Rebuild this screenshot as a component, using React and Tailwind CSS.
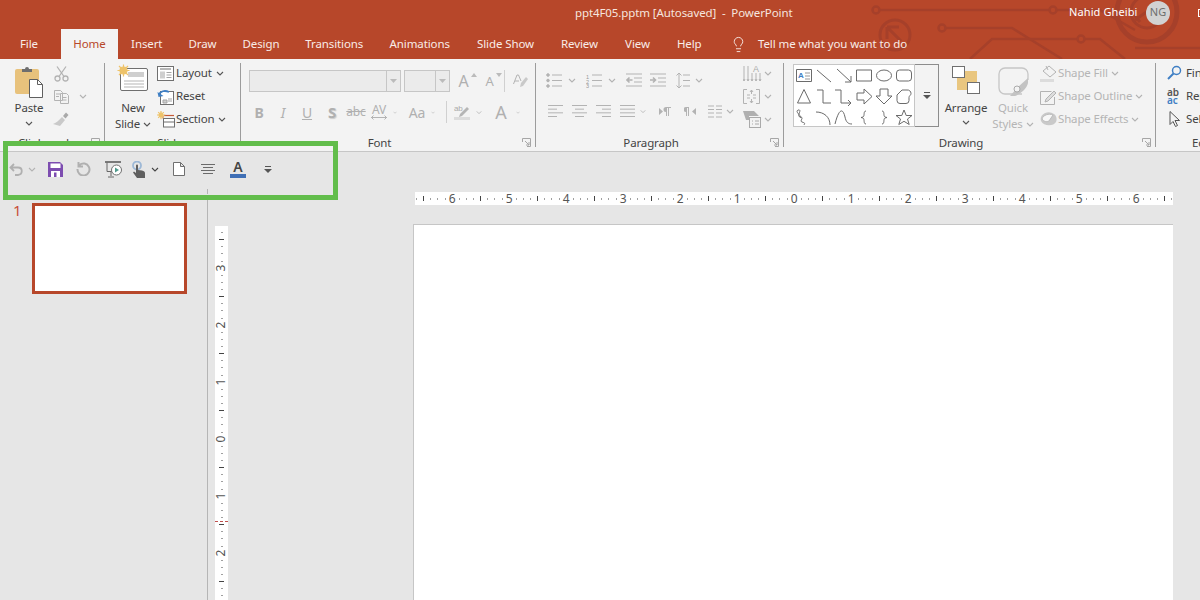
import { Lightbulb } from "lucide-react";

const G = "#b3b3b3";

function Chev({ color = "#8c8c8c" }) {
  return (
    <svg width="8" height="5" viewBox="0 0 8 5" fill="none" stroke={color} strokeWidth="1.1">
      <path d="M1 1l3 3 3-3" />
    </svg>
  );
}

function Launcher() {
  return (
    <svg width="9" height="9" viewBox="0 0 9 9" fill="none" stroke="#a6a6a6">
      <path d="M.5 4V.5h8v8H5M3 3l4 4M7 4v3H4" />
    </svg>
  );
}

function Cell({ className, children }) {
  return <div className={"flex shrink-0 items-center justify-center " + className}>{children}</div>;
}

// text-line icon used by the paragraph buttons
function Lines({ rows, w = 16 }) {
  return (
    <svg width={w} height="14" viewBox={`0 0 ${w} 14`} fill="none" stroke={G}>
      {rows.map((r, i) => (
        <path key={i} d={`M${r[0]} ${1.5 + i * (11 / (rows.length - 1))}H${r[1]}`} />
      ))}
    </svg>
  );
}

function Group({ className, label, launcher, children }) {
  return (
    <div className={"flex shrink-0 flex-col " + className}>
      <div className="h-[75px]">{children}</div>
      <div className="flex h-[17px] items-center text-[#444]">
        <div className="flex-1 text-center whitespace-nowrap">{label}</div>
        {launcher && (
          <div className="flex w-[17px] justify-center">
            <Launcher />
          </div>
        )}
      </div>
    </div>
  );
}

function Sep() {
  return <div className="mt-[4px] h-[84px] w-px shrink-0 bg-[#9c9c9c]" />;
}

function Paste() {
  return (
    <svg width="30" height="33" viewBox="0 0 30 33">
      <rect x="1" y="4" width="24" height="25" rx="2" fill="#e8c27c" />
      <path d="M8 7V4h3a2 2 0 0 1 4 0h3v3z" fill="#6e6e6e" />
      <path d="M15.5 14.500h8l5 5v13h-13z" fill="#fff" stroke="#5f5f5f" />
      <path d="M23.500 14.500v5h5" fill="none" stroke="#5f5f5f" />
    </svg>
  );
}

function Scissors() {
  return (
    <svg width="15" height="16" viewBox="0 0 15 16" fill="none" stroke={G} strokeWidth="1.3">
      <circle cx="3.500" cy="12.500" r="2.500" />
      <circle cx="11.500" cy="12.500" r="2.500" />
      <path d="M5 10.500L12 .5M10 10.500L3 .5" />
    </svg>
  );
}

function CopyIcon() {
  return (
    <svg width="15" height="14" viewBox="0 0 15 14" fill="none" stroke={G}>
      <path d="M.5.5h6l2 2v8h-8zM6.500 3.500h6l2 2v8h-8zM2 4h4M2 6.500h3M8.500 7.500h4M8.500 10h4" />
    </svg>
  );
}

function Brush() {
  return (
    <svg width="16" height="15" viewBox="0 0 16 15">
      <path d="M9 5l3 3-5 6-7-2c3-1 5-3 9-7z" fill="#c9c9c9" />
      <path d="M10 4l3-3.500 2.500 2.500-3 3.500z" fill="#a9a9a9" />
    </svg>
  );
}

function Sun({ x, y, r = 3.500 }) {
  return (
    <g stroke="#eec36a" strokeWidth="1.200">
      <path d={`M${x - r - 2.500} ${y}h${2 * r + 5}M${x} ${y - r - 2.500}v${2 * r + 5}M${x - r - 1} ${y - r - 1}l${2 * r + 2} ${2 * r + 2}M${x + r + 1} ${y - r - 1}l${-2 * r - 2} ${2 * r + 2}`} />
      <circle cx={x} cy={y} r={r} fill="#eec36a" />
    </g>
  );
}

function NewSlideIcon() {
  return (
    <svg width="32" height="28" viewBox="0 0 32 28" fill="none">
      <rect x="3.500" y="4.500" width="27" height="22" rx="1.500" fill="#fff" stroke="#6f6f6f" />
      <rect x="11" y="8" width="16" height="5" fill="#cfcfcf" />
      <path d="M7 17h20M7 20h20M7 23h20" stroke="#b5b5b5" />
      <Sun x={6.500} y={6.500} />
    </svg>
  );
}

function LayoutIcon() {
  return (
    <svg width="17" height="15" viewBox="0 0 17 15" fill="none" stroke="#6f6f6f">
      <rect x=".5" y=".5" width="16" height="14" fill="#fff" />
      <path d="M3 3h11" />
      <rect x="3" y="5.500" width="5" height="7" fill="#cfcfcf" stroke="none" />
      <path d="M9.500 6.500h5M9.500 9h5M9.500 11.500h5" stroke="#a5a5a5" />
    </svg>
  );
}

function ResetIcon() {
  return (
    <svg width="17" height="16" viewBox="0 0 17 16" fill="none">
      <rect x="3.500" y="2.500" width="13" height="13" fill="#fff" stroke="#6f6f6f" />
      <path d="M6 11h4v3H6zM11 10h4M11 12h4" fill="#cfcfcf" stroke="#a5a5a5" />
      <path d="M2 6c1-4 6-5 10-3" stroke="#3f7fc4" strokeWidth="1.800" />
      <path d="M.5 3l1 5 5-1z" fill="#3f7fc4" />
    </svg>
  );
}

function SectionIcon() {
  return (
    <svg width="18" height="17" viewBox="0 0 18 17" fill="none">
      <path d="M7 4.500h10" stroke="#c55a37" strokeWidth="1.200" />
      <path d="M6 4.500v3" stroke="#c55a37" />
      <rect x="6.500" y="7.500" width="11" height="8.500" fill="#fff" stroke="#6f6f6f" />
      <path d="M6.500 11h11" stroke="#6f6f6f" />
      <Sun x={4} y={4} r={1.800} />
    </svg>
  );
}

function Bullets({ numbered }) {
  return (
    <svg width="16" height="15" viewBox="0 0 16 15" fill="none" stroke={G}>
      <path d="M6 2h10M6 7.500h10M6 13h10" />
      {numbered ? (
        <text x="0" y="6" fontSize="5.500" fill="#999" stroke="none" fontFamily="Liberation Sans">1</text>
      ) : (
        <circle cx="2" cy="2" r="1.300" fill={G} />
      )}
      {numbered ? (
        <text x="0" y="10.500" fontSize="5.500" fill="#999" stroke="none" fontFamily="Liberation Sans">2</text>
      ) : (
        <circle cx="2" cy="7.500" r="1.300" fill={G} />
      )}
      {numbered ? (
        <text x="0" y="15" fontSize="5.500" fill="#999" stroke="none" fontFamily="Liberation Sans">3</text>
      ) : (
        <circle cx="2" cy="13" r="1.300" fill={G} />
      )}
    </svg>
  );
}

function Indent({ dir }) {
  return (
    <svg width="16" height="14" viewBox="0 0 16 14" fill="none" stroke={G}>
      <path d="M0 1h16M0 13h16M8 5h8M8 9h8" />
      <path d={dir === "out" ? "M6.500 7H1M3.500 4.500L1 7l2.500 2.500" : "M0 7h5.500M3 4.500L5.500 7 3 9.500"} strokeWidth="1.600" />
    </svg>
  );
}

function LineSpacing() {
  return (
    <svg width="14" height="17" viewBox="0 0 14 17" fill="none" stroke={G}>
      <path d="M3 1v15M.5 3.500L3 1l2.500 2.500M.5 13.500L3 16l2.500-2.500M7 3h7M7 8.500h7M7 14h7" />
    </svg>
  );
}

function Pilcrow({ flip }) {
  return (
    <svg width="12" height="9" viewBox="0 0 12 9" fill={G}>
      {flip ? <path d="M0 0h5v9H4V1H3v8H2V5a2.500 2.500 0 0 1 0-5zM12 1v7L8 4.500z" /> : <path d="M0 1v7l4-3.500zM12 0H7a2.500 2.500 0 0 0 0 5v4h1V1h1v8h1V1h2z" />}
    </svg>
  );
}

function TextDir() {
  return (
    <svg width="20" height="17" viewBox="0 0 20 17" fill="none" stroke={G}>
      <path d="M1 1v15M5 1v15M9 8v8M13 8v8M17 8v8M0 14l1 2 1-2M4 14l1 2 1-2M8 14l1 2 1-2M12 14l1 2 1-2M16 14l1 2 1-2" />
      <text x="10" y="7" fontSize="9" fill="#aaa" stroke="none" fontFamily="Liberation Sans">A</text>
    </svg>
  );
}

function AlignText() {
  return (
    <svg width="17" height="15" viewBox="0 0 17 15" fill="none" stroke={G}>
      <path d="M4 .5H.5v14H4M13 .5h3.500v14H13M4 6h3M10 6h3M4 9h3M10 9h3M8.500 1v4M7 3l1.500-2L10 3M8.500 10v4M7 12l1.500 2 1.500-2" />
    </svg>
  );
}

function SmartArt() {
  return (
    <svg width="18" height="17" viewBox="0 0 18 17" fill="none">
      <path d="M0 0h11l5 5H6v4H3z" fill="#b0b0b0" />
      <rect x="6.500" y="6.500" width="11" height="10" fill="#f3f3f3" stroke="#aaa" />
      <path d="M9 10h1M12 10h4M9 13h1M12 13h4" stroke="#aaa" />
    </svg>
  );
}

const shapes = [
  "M3 5L17 17",
  "M3 4L17 17M17 11V17H11",
  "M2.500 5h15v11h-15z",
  "M17.500 10.500a7.500 5.500 0 1 1-15 0a7.500 5.500 0 1 1 15 0z",
  "M5.500 5h9a3 3 0 0 1 3 3v5a3 3 0 0 1-3 3h-9a3 3 0 0 1-3-3V8a3 3 0 0 1 3-3z",
  "M10 3.500L16.500 17h-13z",
  "M3 4H9V17H17",
  "M1 4H7V17H17M14 14l3 3-3 3",
  "M3 7H10V3L18 10.500L10 18V14H3z",
  "M6 3H14V10H18L10 18L2 10H6z",
  "M8 4h5a3.500 3.500 0 0 1 4 3.500c0 2-2 2-2 4v3a3 3 0 0 1-3 3H6a3 3 0 0 1-3-3V9z",
  "M4 3c5-1-2 6 2 7 5 0-1 4 2 5s3 1 2 3M4 3c-3 2 2 4 3 8",
  "M2 5C10 5 16 10 16 18",
  "M1 17C5 1 9 1 11 10 12 15 14 17 18 17",
  "M12 4C9 4 11 9 9 10L7 10.500 9 11C11 12 9 17 12 17",
  "M8 4C11 4 9 9 11 10L13 10.500 11 11C9 12 11 17 8 17",
  "M10 3l2.200 5.500H18L13.500 12l1.700 5.500L10 14.300 4.800 17.500 6.500 12 2 8.500h5.800z",
];

function ShapesGallery() {
  return (
    <div className="grid h-[63px] w-[122px] shrink-0 grid-cols-[repeat(6,20px)] grid-rows-[repeat(3,21px)] border border-[#c6c6c6] bg-white">
      <svg width="20" height="21" viewBox="0 0 20 21" fill="none" stroke="#6b6b6b">
        <path d="M2.500 4.500h15v12h-15z" />
        <text x="4" y="13" fontSize="8" fontWeight="700" fill="#3f7fc4" stroke="none" fontFamily="Liberation Sans">A</text>
        <path d="M11 8h5M11 11h5M11 14h5" stroke="#999" />
      </svg>
      {shapes.map((d, i) => (
        <svg key={i} width="20" height="21" viewBox="0 0 20 21" fill="none" stroke="#6b6b6b">
          <path d={d} />
        </svg>
      ))}
    </div>
  );
}

function Arrange() {
  return (
    <svg width="28" height="28" viewBox="0 0 28 28">
      <rect x="5" y="5" width="20" height="19" fill="#e9c67f" />
      <rect x=".5" y=".5" width="12" height="11" fill="#fff" stroke="#6f6f6f" />
      <rect x="15.500" y="16.500" width="12" height="11" fill="#fff" stroke="#6f6f6f" />
    </svg>
  );
}

function QuickStyles() {
  return (
    <svg width="31" height="30" viewBox="0 0 31 30" fill="none">
      <path d="M24 27H7a6 6 0 0 1-6-6V7a6 6 0 0 1 6-6h17a6 6 0 0 1 6 6v6" stroke="#c6c6c6" strokeWidth="1.300" />
      <path d="M30 11L20 20l-8 9h5c6-2 12-8 13-13z" fill="#c3c3c3" />
      <circle cx="19" cy="22" r="3" fill="#f3f3f3" stroke="#aaa" />
    </svg>
  );
}

function ShapeFillIcon() {
  return (
    <svg width="18" height="17" viewBox="0 0 18 17" fill="none" stroke={G}>
      <path d="M3 6l6-5 7 6-6 5z" />
      <path d="M6 1l2 4" />
      <rect x="0" y="14" width="14" height="3" fill="#dcdcdc" stroke="none" />
    </svg>
  );
}

function ShapeOutlineIcon() {
  return (
    <svg width="18" height="16" viewBox="0 0 18 16" fill="none" stroke={G}>
      <path d="M.5 2.500h11M.5 2.500v13h14V8" />
      <path d="M6 10l8-8 2 2-8 8-3 1z" fill="#dcdcdc" />
    </svg>
  );
}

function ShapeEffectsIcon() {
  return (
    <svg width="18" height="15" viewBox="0 0 18 15">
      <path d="M1 9a8 7 0 0 1 13-7c3 2 3 6 2 8-2 4-12 5-15-1z" fill="#c9c9c9" />
      <path d="M2 7c1-4 7-6 11-4l-4 6c-2 1-5 1-7-2z" fill="#f7f7f7" stroke="#bbb" />
    </svg>
  );
}

function FindIcon() {
  return (
    <svg className="shrink-0" width="15" height="15" viewBox="0 0 15 15" fill="none">
      <circle cx="9.500" cy="5.500" r="4" stroke="#3f7fc4" strokeWidth="1.500" />
      <path d="M6.500 8.500L1 14" stroke="#3f7fc4" strokeWidth="2" />
    </svg>
  );
}

function SelectIcon() {
  return (
    <svg className="shrink-0" width="11" height="16" viewBox="0 0 11 16" fill="#f3f3f3" stroke="#555">
      <path d="M1 .5v13l3-3 2.500 5 2-1-2.500-5h4.500z" />
    </svg>
  );
}

function Undo() {
  return (
    <svg width="15" height="13" viewBox="0 0 15 13" fill="none" stroke="#b0b0b0" strokeWidth="1.800">
      <path d="M5 1L1.500 4.500 5 8M2 4.500h7c5 0 5 7 0 7.500H6" />
    </svg>
  );
}

function Save() {
  return (
    <svg width="15" height="15" viewBox="0 0 15 15">
      <path d="M0 0h12l3 3v12H0z" fill="#7d4db0" />
      <rect x="2.500" y="1.500" width="10" height="4.500" fill="#fff" />
      <rect x="3" y="9" width="9" height="6" fill="#fff" />
      <rect x="6" y="10.500" width="2.500" height="4.500" fill="#7d4db0" />
    </svg>
  );
}

function Redo() {
  return (
    <svg width="15" height="14" viewBox="0 0 15 14" fill="none" stroke="#b0b0b0" strokeWidth="2">
      <path d="M3.500 3A6 6 0 1 1 1.500 7M2.500 0v4.500H7" />
    </svg>
  );
}

function Present() {
  return (
    <svg width="17" height="17" viewBox="0 0 17 17" fill="none">
      <path d="M0 1h16" stroke="#555" strokeWidth="1.500" />
      <path d="M2 1.500v9h5M6 11v4M3 16h6" stroke="#666" />
      <circle cx="11.500" cy="9" r="5" fill="#fff" stroke="#6f6f6f" />
      <path d="M10 6.500v5l4-2.500z" fill="#4f9a8c" />
    </svg>
  );
}

function Touch() {
  return (
    <svg width="13" height="17" viewBox="0 0 13 17">
      <circle cx="5" cy="4.500" r="4" fill="none" stroke="#9db8d6" strokeWidth="1.800" />
      <path d="M4 4.500a1 1 0 0 1 2 0V9l4 .5c2 .5 3 1 3 3V17H5L1 11.500l1-1 2 1.500z" fill="#5f5f5f" />
    </svg>
  );
}

function Doc() {
  return (
    <svg width="12" height="14" viewBox="0 0 12 14" fill="#fff" stroke="#6f6f6f">
      <path d="M.5.500h7l4 4v9H.5zM7.500.500v4h4" />
    </svg>
  );
}

function AlignCenter() {
  return (
    <svg width="14" height="11" viewBox="0 0 14 11" fill="none" stroke="#6b6b6b">
      <path d="M0 .5h14M2 3.500h10M0 6.500h14M2 9.500h10" />
    </svg>
  );
}

function MoreBtn() {
  return (
    <svg width="8" height="7" viewBox="0 0 8 7" fill="#555">
      <path d="M1 0h6v1H1zM0 3h8L4 7z" />
    </svg>
  );
}

function TitleArt() {
  return (
    <svg className="absolute top-0 left-0" width="1200" height="59" viewBox="0 0 1200 59" fill="none" stroke="#a6402a" strokeWidth="2.500">
      <path d="M879 10H1049M1057 10H1100L1135 30" />
      <circle cx="876" cy="10" r="3.500" />
      <circle cx="1053" cy="10" r="3.500" />
      <path d="M946 28H1012L1062 59" />
      <circle cx="942" cy="28" r="3.500" />
      <path d="M970 59L992 39H1077M1085 39H1100L1125 59" />
      <circle cx="1081" cy="39" r="3.500" />
      <circle cx="895" cy="35" r="15" strokeWidth="3" />
      <path d="M887 27h12M887 27v12M887 27l14 14" strokeWidth="3" />
      <circle cx="1147" cy="12" r="30" strokeWidth="5" />
      <circle cx="1147" cy="12" r="16" strokeWidth="3" />
      <path d="M1135 48H1200" />
      <path d="M1135 20l20-14M1140 22l-8-10" strokeWidth="3" />
    </svg>
  );
}

const tabs = [
  ["Insert", "w-[57.500px]"],
  ["Draw", "w-[54px]"],
  ["Design", "w-[63px]"],
  ["Transitions", "w-[83.500px]"],
  ["Animations", "w-[87.500px]"],
  ["Slide Show", "w-[84px]"],
  ["Review", "w-[64px]"],
  ["View", "w-[52px]"],
  ["Help", "w-[51.500px]"],
];

function HRuler() {
  const slots = [];
  for (let k = -53; k <= 53; k++) slots.push(k);
  return (
    <div className="flex h-[13px] w-[758px] items-center overflow-hidden bg-white">
      <div className="-ml-[2px] flex items-center">
        {slots.map((k) => (
          <div key={k} className="flex h-[13px] w-[7.125px] shrink-0 items-center justify-center">
            {k % 8 === 0 ? (
              <span className="text-[12px] leading-none text-[#555]">{Math.abs(k / 8)}</span>
            ) : Math.abs(k % 8) === 4 ? (
              <div className="h-[5px] w-px bg-[#444]" />
            ) : (
              <div className="h-[2px] w-px bg-[#a0a0a0]" />
            )}
          </div>
        ))}
      </div>
    </div>
  );
}

function VRuler() {
  const slots = [];
  for (let k = -29; k <= 23; k++) slots.push(k);
  return (
    <div className="relative mt-[74px] ml-[7px] flex h-[374px] w-[13px] shrink-0 flex-col overflow-hidden bg-white pt-[3px]">
      {slots.map((k) => (
        <div key={k} className="flex h-[7.125px] w-[13px] shrink-0 items-center justify-center">
          {k % 8 === 0 ? (
            <span className="-rotate-90 text-[12px] leading-none text-[#555]">{Math.abs(k / 8)}</span>
          ) : Math.abs(k % 8) === 4 ? (
            <div className="h-px w-[5px] bg-[#444]" />
          ) : (
            <div className="h-px w-[2px] bg-[#a0a0a0]" />
          )}
        </div>
      ))}
      <div className="absolute top-[295px] left-0 w-[13px] border-t border-dashed border-[#c0504d]" />
    </div>
  );
}

export default function App() {
  return (
    <div className="relative flex h-[600px] w-[1200px] flex-col overflow-hidden bg-[#e6e6e6] font-['Noto_Sans','Open_Sans',sans-serif] text-[11.500px]">
      {/* title bar */}
      <div className="relative h-[59px] shrink-0 bg-[#b7472a] text-white">
        <TitleArt />
        <div className="relative flex h-[25px] items-center">
          <div className="ml-[575px] w-[494px] shrink-0 tracking-[-0.1px] whitespace-pre text-[#f6e5df]">ppt4F05.pptm [Autosaved]  -  PowerPoint</div>
          <div className="w-[77px] shrink-0 text-[11px] tracking-[0.1px] whitespace-nowrap">Nahid Gheibi</div>
          <div className="flex size-[24px] shrink-0 items-center justify-center rounded-full bg-[#d2d2d2] text-[11px] text-[#6e6e6e]">NG</div>
          <div className="ml-[28px] h-[8px] w-[8px] shrink-0 border border-white" />
        </div>
        <div className="relative mt-[4px] flex h-[30px] items-center tracking-[-0.1px] text-[#f9ece8]">
          <div className="w-[61px] pb-[1px] pl-[20px]">File</div>
          <div className="flex h-[30px] w-[57px] items-center justify-center bg-[#f3f3f3] text-[#b7472a]">Home</div>
          {tabs.map(([name, w]) => (
            <div key={name} className={"shrink-0 text-center whitespace-nowrap " + w}>{name}</div>
          ))}
          <Lightbulb className="ml-[15px] shrink-0" size={17} strokeWidth={1.300} />
          <div className="ml-[11px] whitespace-nowrap">Tell me what you want to do</div>
        </div>
      </div>

      {/* ribbon */}
      <div className="flex h-[93px] shrink-0 border-b border-[#c6c6c6] bg-[#f3f3f3] tracking-[-0.15px] text-[#444]">
        <Group className="w-[104px]" label="Clipboard" launcher>
          <div className="flex pt-[3px]">
            <div className="ml-[9px] flex w-[40px] flex-col items-center">
              <div className="mt-[3px] h-[33px]"><Paste /></div>
              <div className="mt-[2px] leading-[16px]">Paste</div>
              <div className="mt-[5px]"><Chev color="#555" /></div>
            </div>
            <div className="flex w-[24px] flex-col">
              <Cell className="h-[23px]"><Scissors /></Cell>
              <Cell className="h-[23px]"><CopyIcon /></Cell>
              <Cell className="h-[23px]"><Brush /></Cell>
            </div>
            <div className="ml-[6px] flex h-[69px] items-center"><Chev color={G} /></div>
          </div>
        </Group>
        <Sep />
        <Group className="w-[135px]" label="Slides">
          <div className="flex pt-[3px]">
            <div className="ml-[8px] flex w-[40px] flex-col items-center">
              <div className="mt-[2px] h-[28px]"><NewSlideIcon /></div>
              <div className="mt-[8px] leading-[16px]">New</div>
              <div className="flex items-center gap-[3px] leading-[16px] whitespace-nowrap">Slide <Chev color="#555" /></div>
            </div>
            <div className="ml-[4px] flex flex-col">
              {[
                [<LayoutIcon key="l" />, "Layout", true],
                [<ResetIcon key="r" />, "Reset", false],
                [<SectionIcon key="s" />, "Section", true],
              ].map(([icon, text, chev]) => (
                <div key={text} className="flex h-[23px] items-center">
                  <div className="flex w-[19px] justify-start">{icon}</div>
                  <span className="pb-[2px] whitespace-nowrap">{text}</span>
                  {chev && <span className="ml-[4px]"><Chev color="#555" /></span>}
                </div>
              ))}
            </div>
          </div>
        </Group>
        <Sep />
        <Group className="w-[294px]" label="Font" launcher>
          <div className="mt-[11px] flex h-[22px] items-center pl-[8px]">
            <div className="flex h-[22px] w-[152px] shrink-0 justify-end border border-[#c6c6c6] bg-[#ebebeb]">
              <div className="flex w-[14px] items-center justify-center border-l border-[#c6c6c6]"><svg width="7" height="4"><path d="M0 0h7L3.500 4z" fill="#bbb" /></svg></div>
            </div>
            <div className="ml-[2.500px] flex h-[22px] w-[46px] shrink-0 justify-end border border-[#c6c6c6] bg-[#ebebeb]">
              <div className="flex w-[14px] items-center justify-center border-l border-[#c6c6c6]"><svg width="7" height="4"><path d="M0 0h7L3.500 4z" fill="#bbb" /></svg></div>
            </div>
            <Cell className="ml-[7px] w-[14px] text-[16px] text-[#b0b0b0]">A</Cell>
            <svg className="-mt-[12px]" width="6" height="4"><path d="M0 4h6L3 0z" fill="#bbb" /></svg>
            <Cell className="ml-[7px] w-[12px] pt-[2px] text-[13px] text-[#b0b0b0]">A</Cell>
            <svg className="-mt-[12px]" width="6" height="4"><path d="M0 0h6L3 4z" fill="#bbb" /></svg>
            <div className="ml-[2px] h-[22px] w-px shrink-0 bg-[#d0d0d0]" />
            <Cell className="ml-[8px] w-[15px]">
              <svg width="15" height="15" viewBox="0 0 15 15">
                <path d="M8 9l5-6 2 2-5 7-3 1z" fill="#c9c9c9" />
                <path d="M.5 10L4 1h1.500L8 7M2 7h4" fill="none" stroke={G} />
              </svg>
            </Cell>
          </div>
          <div className="mt-[9px] flex h-[22px] items-center pl-[8px] text-[#b0b0b0]">
            <Cell className="w-[20px] text-[14px] font-bold">B</Cell>
            <Cell className="w-[28px] text-[14px] italic">I</Cell>
            <Cell className="w-[20px] text-[14px] underline">U</Cell>
            <Cell className="w-[30px] text-[15px] font-bold [text-shadow:1px_1px_1px_#ccc]">S</Cell>
            <Cell className="w-[18px] text-[12px] line-through">abc</Cell>
            <Cell className="w-[28px]">
              <div className="flex flex-col items-center leading-[11px]">
                <span className="text-[12px]">AV</span>
                <svg width="16" height="5" viewBox="0 0 16 5" fill="none" stroke={G}><path d="M0 2.500h16M2.500 .5L.5 2.500l2 2M13.500 .5l2 2-2 2" /></svg>
              </div>
            </Cell>
            <Cell className="w-[4px]"><Chev color={G} /></Cell>
            <Cell className="ml-[6px] w-[28px] text-[14px]">Aa</Cell>
            <Cell className="w-[4px]"><Chev color={G} /></Cell>
            <div className="ml-[11px] h-[22px] w-px shrink-0 bg-[#d0d0d0]" />
            <Cell className="w-[29px]">
              <svg width="16" height="16" viewBox="0 0 16 16">
                <text x="0" y="7" fontSize="8" fill="#aaa" fontFamily="Liberation Sans">ab</text>
                <path d="M6 10l7-7 2 2-7 7-3 1z" fill="#b5b5b5" />
                <rect x="0" y="13" width="16" height="3" fill="#dcdcdc" />
              </svg>
            </Cell>
            <Cell className="w-[6px]"><Chev color={G} /></Cell>
            <Cell className="ml-[4px] w-[30px] text-[18px]">A</Cell>
            <Cell className="w-[4px]"><Chev color={G} /></Cell>
          </div>
        </Group>
        <Sep />
        <Group className="w-[247px]" label="Paragraph" launcher>
          <div className="flex">
            <div className="w-[201px] shrink-0 pl-[8px]">
              <div className="mt-[11px] flex h-[20px] items-center">
                <Cell className="w-[20px]"><Bullets /></Cell>
                <Cell className="w-[16px]"><Chev color={G} /></Cell>
                <Cell className="w-[28px]"><Bullets numbered /></Cell>
                <Cell className="w-[8px]"><Chev color={G} /></Cell>
                <Cell className="ml-[10px] w-[16px]"><Indent dir="out" /></Cell>
                <Cell className="ml-[8px] w-[16px]"><Indent /></Cell>
                <Cell className="ml-[10px] w-[14px]"><LineSpacing /></Cell>
                <Cell className="w-[18px]"><Chev color={G} /></Cell>
              </div>
              <div className="mt-[11px] flex h-[20px] items-center">
                <Cell className="w-[22px]"><Lines w={15} rows={[[0, 15], [0, 9], [0, 15], [0, 9]]} /></Cell>
                <Cell className="w-[26px]"><Lines w={15} rows={[[0, 15], [3, 12], [0, 15], [3, 12]]} /></Cell>
                <Cell className="w-[22px]"><Lines w={15} rows={[[0, 15], [6, 15], [0, 15], [6, 15]]} /></Cell>
                <Cell className="w-[26px]"><Lines w={15} rows={[[0, 15], [0, 15], [0, 15], [0, 15]]} /></Cell>
                <Cell className="w-[6px]"><Chev color={G} /></Cell>
                <Cell className="ml-[13px] w-[12px]"><Pilcrow /></Cell>
                <Cell className="ml-[12px] w-[14px]"><Pilcrow flip /></Cell>
                <Cell className="ml-[10px] w-[16px]">
                  <svg width="14" height="13" viewBox="0 0 14 13" fill="none" stroke={G}><path d="M0 1h6M8 1h6M0 4.500h6M8 4.500h6M0 8h6M8 8h6M0 12h6M8 12h6" /></svg>
                </Cell>
                <Cell className="w-[14px]"><Chev color={G} /></Cell>
              </div>
            </div>
            <div className="ml-[6px] flex flex-col pt-[3px]">
              {[<TextDir key="a" />, <AlignText key="b" />, <SmartArt key="c" />].map((icon, i) => (
                <div key={i} className="flex h-[23px] items-center">
                  <div className="flex w-[20px] justify-start">{icon}</div>
                  <span className="ml-[1px]"><Chev color={G} /></span>
                </div>
              ))}
            </div>
          </div>
        </Group>
        <Sep />
        <Group className="w-[371px]" label="Drawing" launcher>
          <div className="flex pt-[5px] pl-[9px]">
            <ShapesGallery />
            <div className="flex h-[63px] w-[24px] shrink-0 items-center justify-center border border-l-0 border-[#8c8c8c]"><MoreBtn /></div>
            <div className="ml-[5px] flex w-[44px] shrink-0 flex-col items-center">
              <div className="mt-[2px] h-[28px]"><Arrange /></div>
              <div className="mt-[6px] leading-[16px]">Arrange</div>
              <div className="mt-[4px]"><Chev color="#555" /></div>
            </div>
            <div className="ml-[3px] flex w-[44px] shrink-0 flex-col items-center text-[#b5b5b5]">
              <div className="mt-[3px] h-[30px]"><QuickStyles /></div>
              <div className="mt-[3px] leading-[16px]">Quick</div>
              <div className="flex items-center gap-[3px] leading-[16px]">Styles <Chev color={G} /></div>
            </div>
            <div className="-mt-[2px] ml-[5px] flex flex-col text-[#b5b5b5]">
              {[
                [<ShapeFillIcon key="f" />, "Shape Fill"],
                [<ShapeOutlineIcon key="o" />, "Shape Outline"],
                [<ShapeEffectsIcon key="e" />, "Shape Effects"],
              ].map(([icon, text]) => (
                <div key={text} className="flex h-[23px] items-center">
                  <div className="flex w-[18px]">{icon}</div>
                  <span className="pb-[2px] whitespace-nowrap">{text}</span>
                  <span className="ml-[3px]"><Chev color={G} /></span>
                </div>
              ))}
            </div>
          </div>
        </Group>
        <Sep />
        <div className="flex w-[44px] shrink-0 flex-col overflow-hidden pl-[11px]">
          <div className="flex h-[75px] flex-col pt-[2px]">
            <div className="flex h-[23px] items-center gap-[4px] whitespace-nowrap"><FindIcon /><span>Find</span></div>
            <div className="flex h-[23px] items-center gap-[3px] whitespace-nowrap">
              <div className="flex w-[16px] shrink-0 flex-col text-[10px] leading-[8px] font-semibold">
                <span className="text-[#555]">ab</span>
                <span className="text-[#3f7fc4]">ac</span>
              </div>
              <span>Replace</span>
            </div>
            <div className="flex h-[23px] items-center gap-[6px] pl-[2px] whitespace-nowrap"><SelectIcon /><span>Select</span></div>
          </div>
          <div className="flex h-[17px] items-center pl-[25px] whitespace-nowrap">Editing</div>
        </div>
      </div>

      {/* workspace */}
      <div className="flex min-h-0 flex-1">
        <div className="flex w-[208px] shrink-0 items-start border-r border-[#b5b5b5] pt-[51px]">
          <div className="ml-[13px] w-[19px] text-[15px] leading-[14px] text-[#c8503a]">1</div>
          <div className="h-[91px] w-[155px] border-[3px] border-[#b7472a] bg-white" />
        </div>
        <VRuler />
        <div className="ml-[185px] flex w-[760px] shrink-0 flex-col">
          <div className="mt-[40px] ml-[2px]"><HRuler /></div>
          <div className="mt-[19px] flex-1 border-t border-l border-[#c6c6c6] bg-white" />
        </div>
      </div>

      {/* green annotation over the quick access toolbar */}
      <div className="absolute top-[141px] left-[3px] h-[59px] w-[335px] border-[5px] border-[#62bd4b] bg-[#e6e6e6]">
        <div className="h-[6px] border-b border-[#c6c6c6] bg-[#f3f3f3]" />
        <div className="flex h-[34px] items-center">
          <Cell className="w-[16px]"><Undo /></Cell>
          <Cell className="w-[16px]"><Chev color={G} /></Cell>
          <Cell className="w-[30px]"><Save /></Cell>
          <Cell className="w-[26px]"><Redo /></Cell>
          <Cell className="w-[34px]"><Present /></Cell>
          <Cell className="w-[16px]"><Touch /></Cell>
          <Cell className="w-[18px]"><Chev color="#444" /></Cell>
          <Cell className="w-[30px]"><Doc /></Cell>
          <Cell className="w-[28px]"><AlignCenter /></Cell>
          <Cell className="w-[32px]">
            <div className="flex flex-col items-center">
              <span className="text-[14px] leading-[12px] font-semibold text-[#444]">A</span>
              <div className="mt-[1px] h-[4px] w-[16px] bg-[#3f6fb5]" />
            </div>
          </Cell>
          <Cell className="w-[28px]"><MoreBtn /></Cell>
        </div>
        <div className="mt-[3px] ml-[199px] h-[5px] w-px bg-[#b5b5b5]" />
      </div>
    </div>
  );
}
